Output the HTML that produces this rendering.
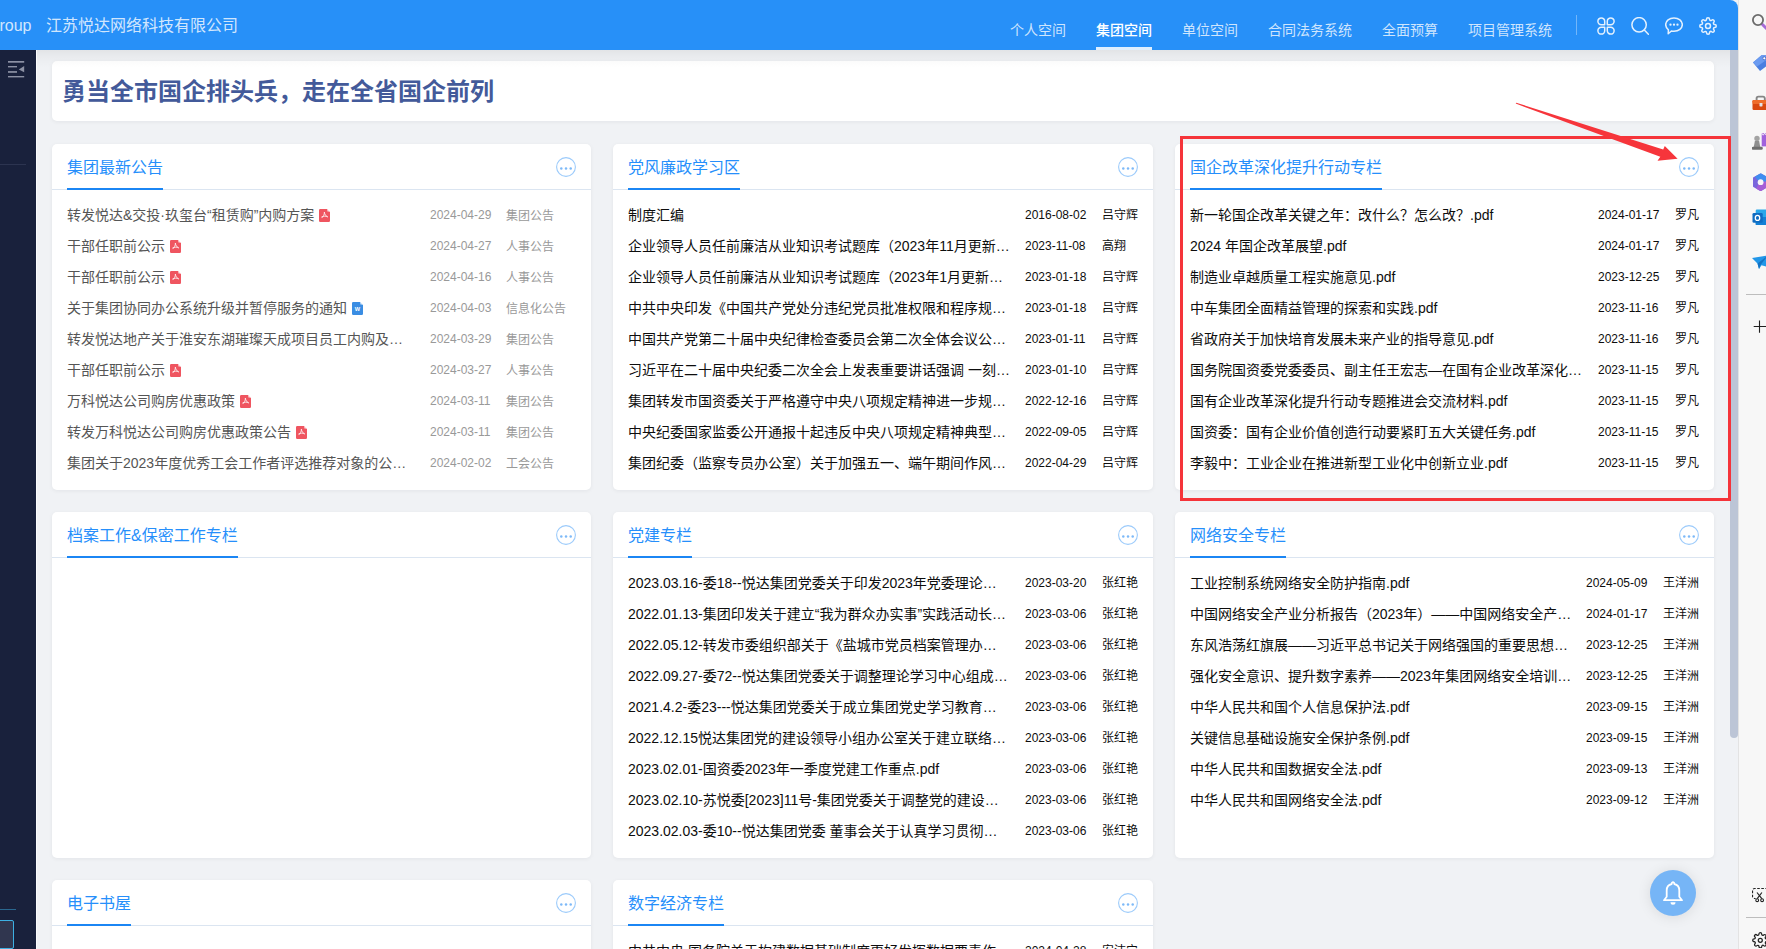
<!DOCTYPE html>
<html lang="zh-CN"><head><meta charset="utf-8"><title>集团空间</title>
<style>
*{box-sizing:border-box;margin:0;padding:0}
html,body{width:1766px;height:949px;overflow:hidden}
body{position:relative;background:#f0f2f5;font-family:"Liberation Sans","Noto Sans CJK SC",sans-serif;font-size:14px;color:#333}
.abs{position:absolute}
#edge{left:1738px;top:0;width:28px;height:949px;background:#f7f7f7;border-left:1px solid #e3e3e3}
#hdr{left:0;top:0;width:1738px;height:50px;background:#2790f8;border-top-right-radius:8px;color:#fff}
#side{left:0;top:50px;width:36px;height:899px;background:#19213c}
#sideline{left:36px;top:50px;width:1px;height:899px;background:#fbfcfd}
#sb{left:1730px;top:50px;width:8px;height:688px;background:#bcc5d6;border-radius:0 0 4px 4px}
#hdrshadow{left:37px;top:50px;width:1693px;height:18px;background:linear-gradient(rgba(0,0,0,.058),rgba(0,0,0,.034) 28%,rgba(0,0,0,.014) 60%,rgba(0,0,0,0));pointer-events:none}
.card{position:absolute;background:#fff;border-radius:5px;box-shadow:0 1px 4px rgba(0,21,41,.06)}
#ttl{left:52px;top:61px;width:1662px;height:60px}
#ttl h1{position:absolute;left:10px;top:1px;line-height:60px;font-size:24px;font-weight:700;color:#435a9a;white-space:nowrap}
.ch{position:absolute;left:0;top:0;right:0;height:46px;border-bottom:1px solid #dbe5f1}
.ct{position:absolute;left:15px;top:0;height:46px;line-height:47px;font-size:16px;color:#268ffb;border-bottom:2px solid #1b86f4;white-space:nowrap}
.more{position:absolute;right:15px;top:13px;width:20px;height:20px}
.lst{position:absolute;left:15px;right:15px;top:56px}
.r{display:flex;height:31px;line-height:31px;white-space:nowrap}
.t{flex:1 1 0;min-width:0;overflow:hidden;font-size:14px}
.d{flex:0 0 auto;font-size:12px}
.n{flex:0 0 auto;font-size:12px;position:relative}
.g .n{top:1px}
.g .t{color:#555}
.g .d,.g .n{color:#999}
.k .t,.k .d,.k .n{color:#0d0d0d}
.ic{display:inline-block;width:11px;height:13px;vertical-align:-1.500px;margin-left:5px}
.nav{position:absolute;top:0;height:50px;line-height:60px;font-size:14px;color:rgba(255,255,255,.78);white-space:nowrap}
.nav.on{color:#fff;font-weight:500}
.nav.on:after{content:"";position:absolute;left:0;right:0;bottom:0;height:3px;background:rgba(255,255,255,.85)}
</style></head>
<body>
<div id="edge" class="abs">
<svg class="abs" style="left:13px;top:8px" width="15" height="24" viewBox="0 0 15 24"><path d="M10.500 16.500L15 21" stroke="#a66bd8" stroke-width="3" stroke-linecap="round"/><circle cx="6" cy="12" r="5.100" fill="none" stroke="#6b6b6b" stroke-width="1.800"/></svg>
<svg class="abs" style="left:13px;top:52px" width="15" height="20" viewBox="0 0 15 20"><path d="M1 10.500L9.500 3.200H16V13L8 19Z" fill="#4a7fe0"/><path d="M1 10.500L9.500 3.200H16V7L5 14.500Z" fill="#6b9bf0"/><circle cx="12.300" cy="6.300" r="1.500" fill="#fff" stroke="#3b5fc0" stroke-width=".8"/></svg>
<svg class="abs" style="left:13px;top:94px" width="15" height="18" viewBox="0 0 15 18"><path d="M4.600 6.500V4.400A1.800 1.800 0 0 1 6.400 2.600h4.600A1.800 1.800 0 0 1 12.800 4.400V6.500" fill="none" stroke="#858585" stroke-width="1.900"/><rect x="0.500" y="6" width="16" height="10" rx="1.200" fill="#d9480f"/><rect x="0.500" y="6" width="16" height="4" rx="1.200" fill="#ef6c2a"/><rect x="7.500" y="9" width="3" height="3.400" rx=".6" fill="#dfe3ea"/></svg>
<svg class="abs" style="left:13px;top:130px" width="15" height="24" viewBox="0 0 15 24"><path d="M9.700 3.200h6v13.200h-6z" fill="#a062dc"/><path d="M9.700 3.200l1.500 2 1.500-2 1.500 2" fill="none" stroke="#f7f7f7" stroke-width=".9"/><circle cx="5" cy="8.400" r="2.700" fill="#a3a3a3"/><path d="M2.900 11h4.200l1.200 6h-6.600Z" fill="#8f8f8f"/><rect x="-.2" y="16.800" width="11" height="3" rx="1.400" fill="#6e6e6e"/></svg>
<svg class="abs" style="left:13px;top:170px" width="15" height="24" viewBox="0 0 15 24"><path d="M8.700 4.200L15.600 8v8.300L8.700 20.200 1.800 16.200V8Z" fill="#7a66dc" stroke="#7a66dc" stroke-width="1.600" stroke-linejoin="round"/><path d="M8.700 4.200L15.600 8v4.200H8.700L4 6.900Z" fill="#3f8ef0" stroke="#3f8ef0" stroke-width="1.600" stroke-linejoin="round"/><path d="M8.700 20.200l6.900-4V12.200H8.700l-3.500 6Z" fill="#a55fd6" stroke="#a55fd6" stroke-width="1.600" stroke-linejoin="round"/><circle cx="8.600" cy="12.200" r="2.900" fill="#f7f7f7"/></svg>
<svg class="abs" style="left:13px;top:209px" width="15" height="24" viewBox="0 0 15 24"><rect x="3.700" y=".6" width="13" height="15.400" rx="1.200" fill="#29a7ea"/><rect x="3.700" y="8" width="13" height="8" fill="#1380d6"/><rect x=".5" y="4" width="10.200" height="9.800" rx="1.300" fill="#0f6cc2"/><ellipse cx="5.500" cy="8.900" rx="2.200" ry="2.500" fill="none" stroke="#fff" stroke-width="1.300"/></svg>
<svg class="abs" style="left:13px;top:250px" width="15" height="24" viewBox="0 0 15 24"><path d="M0 8l16-2.500V17l-6.500-1.800L7 19l-1.500-5.500Z" fill="#2196e8"/><path d="M5.500 13.500L16 5.500 8.500 15 7 19Z" fill="#1373c4"/></svg>
<div class="abs" style="left:7px;top:294px;width:21px;height:1px;background:#bdbdbd"></div>
<svg class="abs" style="left:13px;top:316px" width="15" height="20" viewBox="0 0 15 20"><path d="M7.500 4.400v12.400M1.700 10.500h14" stroke="#1f1f1f" stroke-width="1.100"/></svg>
<svg class="abs" style="left:13px;top:884px" width="15" height="22" viewBox="0 0 15 22"><path d="M16 4.500H2.500A2 2 0 0 0 .5 6.500v6A2 2 0 0 0 2.500 14.500H3.600" fill="none" stroke="#222" stroke-width="1.200" stroke-dasharray="2.600 1.500"/><path d="M5 8.500L9.800 14.700M9.900 8.500L5.200 14.700" stroke="#222" stroke-width="1.200"/><circle cx="5.200" cy="16.200" r="1.400" fill="none" stroke="#222" stroke-width="1.100"/><circle cx="10.100" cy="16.200" r="1.400" fill="none" stroke="#222" stroke-width="1.100"/></svg>
<div class="abs" style="left:7px;top:917px;width:21px;height:1px;background:#bdbdbd"></div>
<svg class="abs" style="left:12.500px;top:931.600px" width="16.600" height="16.600" viewBox="0 0 24 24" fill="none" stroke="#222" stroke-width="1.800" stroke-linejoin="round"><circle cx="12" cy="12" r="2.900"/><path d="M19.400 15a1.650 1.650 0 0 0 .33 1.820l.06.060a2 2 0 1 1-2.830 2.830l-.06-.06a1.650 1.650 0 0 0-1.820-.33 1.650 1.650 0 0 0-1 1.510V21a2 2 0 0 1-4 0v-.09A1.650 1.650 0 0 0 9 19.400a1.650 1.650 0 0 0-1.820.33l-.06.060a2 2 0 1 1-2.830-2.830l.06-.06a1.650 1.650 0 0 0 .33-1.820 1.650 1.650 0 0 0-1.510-1H3a2 2 0 0 1 0-4h.09A1.650 1.650 0 0 0 4.600 9a1.650 1.650 0 0 0-.33-1.820l-.06-.06a2 2 0 1 1 2.830-2.830l.06.060a1.650 1.650 0 0 0 1.820.33H9a1.650 1.650 0 0 0 1-1.510V3a2 2 0 0 1 4 0v.09a1.650 1.650 0 0 0 1 1.510 1.650 1.650 0 0 0 1.820-.33l.06-.06a2 2 0 1 1 2.830 2.830l-.06.060a1.650 1.650 0 0 0-.33 1.820V9a1.650 1.650 0 0 0 1.510 1H21a2 2 0 0 1 0 4h-.09a1.650 1.650 0 0 0-1.510 1z"/></svg>
</div>
<div id="hdr" class="abs">
<div class="abs" style="left:-13px;top:1px;height:50px;line-height:50px;font-size:16px;color:rgba(255,255,255,.8);white-space:nowrap">Group</div>
<div class="abs" style="left:46px;top:1px;height:50px;line-height:50px;font-size:16px;color:rgba(255,255,255,.8);white-space:nowrap">江苏悦达网络科技有限公司</div>
<div class="nav" style="left:1010px">个人空间</div>
<div class="nav on" style="left:1096px">集团空间</div>
<div class="nav" style="left:1182px">单位空间</div>
<div class="nav" style="left:1268px">合同法务系统</div>
<div class="nav" style="left:1382px">全面预算</div>
<div class="nav" style="left:1468px">项目管理系统</div>
<div class="abs" style="left:1576px;top:15px;width:1px;height:20px;background:rgba(255,255,255,.35)"></div>
<svg class="abs" style="left:1597px;top:16.500px" width="18" height="18" viewBox="0 0 18 18" fill="none" stroke="#e4f1fe" stroke-width="1.500" stroke-linejoin="round"><path d="M7.700 7.700H4.300A3.400 3.400 0 1 1 7.700 4.300Z"/><path d="M10.300 7.700V4.300A3.400 3.400 0 1 1 13.700 7.700Z"/><path d="M7.700 10.300V13.700A3.400 3.400 0 1 1 4.300 10.300Z"/><path d="M10.300 10.300H13.700A3.400 3.400 0 1 1 10.300 13.700Z"/></svg>
<svg class="abs" style="left:1631px;top:16.500px" width="18" height="18" viewBox="0 0 18 18" fill="none" stroke="#e4f1fe" stroke-width="1.500" stroke-linecap="round"><circle cx="8.100" cy="7.800" r="7.200"/><path d="M13.300 13L17.400 17.300"/></svg>
<svg class="abs" style="left:1665px;top:16.500px" width="18" height="18" viewBox="0 0 18 18" fill="none" stroke="#e4f1fe" stroke-width="1.500" stroke-linejoin="round"><path d="M9 .9c4.700 0 8.300 3 8.300 6.700s-3.600 6.700-8.300 6.700c-.9 0-1.800-.1-2.600-.3L3.200 16.800l.2-3.900C1.700 11.700.7 9.800.7 7.600.7 3.900 4.300.9 9 .9Z"/><g fill="#e4f1fe" stroke="none"><circle cx="5.500" cy="7.700" r="1.150"/><circle cx="9" cy="7.700" r="1.150"/><circle cx="12.500" cy="7.700" r="1.150"/></g></svg>
<svg class="abs" style="left:1699px;top:16.500px" width="18" height="18" viewBox="0 0 24 24" fill="none" stroke="#e4f1fe" stroke-width="2" stroke-linejoin="round"><circle cx="12" cy="12" r="3.300"/><path d="M19.400 15a1.650 1.650 0 0 0 .33 1.820l.06.060a2 2 0 1 1-2.830 2.830l-.06-.06a1.650 1.650 0 0 0-1.820-.33 1.650 1.650 0 0 0-1 1.510V21a2 2 0 0 1-4 0v-.09A1.650 1.650 0 0 0 9 19.400a1.650 1.650 0 0 0-1.820.33l-.06.060a2 2 0 1 1-2.830-2.830l.06-.06a1.650 1.650 0 0 0 .33-1.820 1.650 1.650 0 0 0-1.510-1H3a2 2 0 0 1 0-4h.09A1.650 1.650 0 0 0 4.600 9a1.650 1.650 0 0 0-.33-1.820l-.06-.06a2 2 0 1 1 2.830-2.830l.06.060a1.650 1.650 0 0 0 1.820.33H9a1.650 1.650 0 0 0 1-1.510V3a2 2 0 0 1 4 0v.09a1.650 1.650 0 0 0 1 1.510 1.650 1.650 0 0 0 1.820-.33l.06-.06a2 2 0 1 1 2.830 2.830l-.06.060a1.650 1.650 0 0 0-.33 1.820V9a1.650 1.650 0 0 0 1.510 1H21a2 2 0 0 1 0 4h-.09a1.650 1.650 0 0 0-1.510 1z"/></svg>
</div>
<div id="side" class="abs">
<svg class="abs" style="left:8px;top:11px" width="17" height="17" viewBox="0 0 17 17"><g fill="#8c91a4"><rect x="0" y="0" width="16.200" height="1.700"/><rect x="0" y="5" width="9" height="1.400"/><rect x="0" y="10.100" width="9" height="1.700"/><rect x="0" y="15" width="16.200" height="1.400"/><path d="M10.800 8.400L16.200 5v6.200Z"/></g></svg>
<div class="abs" style="left:0;top:114px;width:26px;height:1px;background:#2c3450"></div>
<div class="abs" style="left:0;top:859px;width:16px;height:1px;background:#2a678f"></div>
<div class="abs" style="left:-4px;top:870px;width:18px;height:29px;background:#30364f;border:1px solid #3db0e3;border-radius:2px"></div>
</div><div id="sideline" class="abs"></div>
<div id="ttl" class="card"><h1>勇当全市国企排头兵，走在全省国企前列</h1></div>
<div class="card" style="left:52px;top:144px;width:539px;height:346px">
<div class="ch"><div class="ct">集团最新公告</div><svg class="more" viewBox="0 0 20 20"><circle cx="10" cy="10" r="9.400" fill="#fff" stroke="#9ccbfb" stroke-width="1.100"/><circle cx="5.300" cy="11.600" r="1.250" fill="#7db9f8"/><circle cx="10" cy="11.600" r="1.250" fill="#7db9f8"/><circle cx="14.700" cy="11.600" r="1.250" fill="#7db9f8"/></svg></div>
<div class="lst g">
<div class="r"><div class="t" style="margin-right:20px">转发悦达&amp;交投·玖玺台“租赁购”内购方案<svg class="ic" viewBox="0 0 11 13"><path d="M1.2 0H8l3 3v8.8A1.2 1.2 0 0 1 9.800 13H1.2A1.200 1.200 0 0 1 0 11.800V1.200A1.200 1.200 0 0 1 1.200 0z" fill="#ef5560"/><path d="M8.400 0L11 2.600H9A.6.600 0 0 1 8.400 2z" fill="#fdeaec"/><path d="M5.400 3.500c.3 1.900 1.400 3.400 3 4.300M5.400 3.500c0 2.100-.9 4-2.500 5.300M2.900 7.700c1.800-.7 3.700-.7 5.500 0" stroke="#fff" stroke-width=".75" fill="none" stroke-linecap="round"/></svg></div><div class="d" style="width:76px">2024-04-29</div><div class="n" style="width:70px">集团公告</div></div>
<div class="r"><div class="t" style="margin-right:20px">干部任职前公示<svg class="ic" viewBox="0 0 11 13"><path d="M1.2 0H8l3 3v8.8A1.2 1.2 0 0 1 9.800 13H1.2A1.200 1.200 0 0 1 0 11.800V1.200A1.200 1.200 0 0 1 1.200 0z" fill="#ef5560"/><path d="M8.400 0L11 2.600H9A.6.600 0 0 1 8.400 2z" fill="#fdeaec"/><path d="M5.400 3.500c.3 1.900 1.400 3.400 3 4.300M5.400 3.500c0 2.100-.9 4-2.500 5.300M2.900 7.700c1.800-.7 3.700-.7 5.500 0" stroke="#fff" stroke-width=".75" fill="none" stroke-linecap="round"/></svg></div><div class="d" style="width:76px">2024-04-27</div><div class="n" style="width:70px">人事公告</div></div>
<div class="r"><div class="t" style="margin-right:20px">干部任职前公示<svg class="ic" viewBox="0 0 11 13"><path d="M1.2 0H8l3 3v8.8A1.2 1.2 0 0 1 9.800 13H1.2A1.200 1.200 0 0 1 0 11.800V1.200A1.200 1.200 0 0 1 1.200 0z" fill="#ef5560"/><path d="M8.400 0L11 2.600H9A.6.600 0 0 1 8.400 2z" fill="#fdeaec"/><path d="M5.400 3.500c.3 1.900 1.400 3.400 3 4.300M5.400 3.500c0 2.100-.9 4-2.500 5.300M2.900 7.700c1.800-.7 3.700-.7 5.500 0" stroke="#fff" stroke-width=".75" fill="none" stroke-linecap="round"/></svg></div><div class="d" style="width:76px">2024-04-16</div><div class="n" style="width:70px">人事公告</div></div>
<div class="r"><div class="t" style="margin-right:20px">关于集团协同办公系统升级并暂停服务的通知<svg class="ic" viewBox="0 0 11 13"><path d="M1.2 0H8l3 3v8.8A1.2 1.2 0 0 1 9.800 13H1.2A1.200 1.200 0 0 1 0 11.800V1.200A1.200 1.200 0 0 1 1.200 0z" fill="#3a8de3"/><path d="M8.400 0L11 2.600H9A.6.600 0 0 1 8.400 2z" fill="#e3effb"/><text x="5.300" y="9.200" font-size="5.600" font-weight="700" fill="#fff" text-anchor="middle" font-family="Liberation Sans, sans-serif">W</text></svg></div><div class="d" style="width:76px">2024-04-03</div><div class="n" style="width:70px">信息化公告</div></div>
<div class="r"><div class="t" style="margin-right:20px">转发悦达地产关于淮安东湖璀璨天成项目员工内购及…</div><div class="d" style="width:76px">2024-03-29</div><div class="n" style="width:70px">集团公告</div></div>
<div class="r"><div class="t" style="margin-right:20px">干部任职前公示<svg class="ic" viewBox="0 0 11 13"><path d="M1.2 0H8l3 3v8.8A1.2 1.2 0 0 1 9.800 13H1.2A1.200 1.200 0 0 1 0 11.800V1.200A1.200 1.200 0 0 1 1.200 0z" fill="#ef5560"/><path d="M8.400 0L11 2.600H9A.6.600 0 0 1 8.400 2z" fill="#fdeaec"/><path d="M5.400 3.500c.3 1.900 1.400 3.400 3 4.300M5.400 3.500c0 2.100-.9 4-2.500 5.300M2.900 7.700c1.800-.7 3.700-.7 5.500 0" stroke="#fff" stroke-width=".75" fill="none" stroke-linecap="round"/></svg></div><div class="d" style="width:76px">2024-03-27</div><div class="n" style="width:70px">人事公告</div></div>
<div class="r"><div class="t" style="margin-right:20px">万科悦达公司购房优惠政策<svg class="ic" viewBox="0 0 11 13"><path d="M1.2 0H8l3 3v8.8A1.2 1.2 0 0 1 9.800 13H1.2A1.200 1.200 0 0 1 0 11.800V1.200A1.200 1.200 0 0 1 1.200 0z" fill="#ef5560"/><path d="M8.400 0L11 2.600H9A.6.600 0 0 1 8.400 2z" fill="#fdeaec"/><path d="M5.400 3.500c.3 1.900 1.400 3.400 3 4.300M5.400 3.500c0 2.100-.9 4-2.500 5.300M2.900 7.700c1.800-.7 3.700-.7 5.500 0" stroke="#fff" stroke-width=".75" fill="none" stroke-linecap="round"/></svg></div><div class="d" style="width:76px">2024-03-11</div><div class="n" style="width:70px">集团公告</div></div>
<div class="r"><div class="t" style="margin-right:20px">转发万科悦达公司购房优惠政策公告<svg class="ic" viewBox="0 0 11 13"><path d="M1.2 0H8l3 3v8.8A1.2 1.2 0 0 1 9.800 13H1.2A1.200 1.200 0 0 1 0 11.800V1.200A1.200 1.200 0 0 1 1.200 0z" fill="#ef5560"/><path d="M8.400 0L11 2.600H9A.6.600 0 0 1 8.400 2z" fill="#fdeaec"/><path d="M5.400 3.500c.3 1.900 1.400 3.400 3 4.300M5.400 3.500c0 2.100-.9 4-2.500 5.300M2.900 7.700c1.800-.7 3.700-.7 5.500 0" stroke="#fff" stroke-width=".75" fill="none" stroke-linecap="round"/></svg></div><div class="d" style="width:76px">2024-03-11</div><div class="n" style="width:70px">集团公告</div></div>
<div class="r"><div class="t" style="margin-right:20px">集团关于2023年度优秀工会工作者评选推荐对象的公…</div><div class="d" style="width:76px">2024-02-02</div><div class="n" style="width:70px">工会公告</div></div>
</div></div>
<div class="card" style="left:613px;top:144px;width:540px;height:346px">
<div class="ch"><div class="ct">党风廉政学习区</div><svg class="more" viewBox="0 0 20 20"><circle cx="10" cy="10" r="9.400" fill="#fff" stroke="#9ccbfb" stroke-width="1.100"/><circle cx="5.300" cy="11.600" r="1.250" fill="#7db9f8"/><circle cx="10" cy="11.600" r="1.250" fill="#7db9f8"/><circle cx="14.700" cy="11.600" r="1.250" fill="#7db9f8"/></svg></div>
<div class="lst k">
<div class="r"><div class="t" style="margin-right:15px">制度汇编</div><div class="d" style="width:77px">2016-08-02</div><div class="n" style="width:36px">吕守辉</div></div>
<div class="r"><div class="t" style="margin-right:15px">企业领导人员任前廉洁从业知识考试题库（2023年11月更新…</div><div class="d" style="width:77px">2023-11-08</div><div class="n" style="width:36px">高翔</div></div>
<div class="r"><div class="t" style="margin-right:15px">企业领导人员任前廉洁从业知识考试题库（2023年1月更新…</div><div class="d" style="width:77px">2023-01-18</div><div class="n" style="width:36px">吕守辉</div></div>
<div class="r"><div class="t" style="margin-right:15px">中共中央印发《中国共产党处分违纪党员批准权限和程序规…</div><div class="d" style="width:77px">2023-01-18</div><div class="n" style="width:36px">吕守辉</div></div>
<div class="r"><div class="t" style="margin-right:15px">中国共产党第二十届中央纪律检查委员会第二次全体会议公…</div><div class="d" style="width:77px">2023-01-11</div><div class="n" style="width:36px">吕守辉</div></div>
<div class="r"><div class="t" style="margin-right:15px">习近平在二十届中央纪委二次全会上发表重要讲话强调 一刻…</div><div class="d" style="width:77px">2023-01-10</div><div class="n" style="width:36px">吕守辉</div></div>
<div class="r"><div class="t" style="margin-right:15px">集团转发市国资委关于严格遵守中央八项规定精神进一步规…</div><div class="d" style="width:77px">2022-12-16</div><div class="n" style="width:36px">吕守辉</div></div>
<div class="r"><div class="t" style="margin-right:15px">中央纪委国家监委公开通报十起违反中央八项规定精神典型…</div><div class="d" style="width:77px">2022-09-05</div><div class="n" style="width:36px">吕守辉</div></div>
<div class="r"><div class="t" style="margin-right:15px">集团纪委（监察专员办公室）关于加强五一、端午期间作风…</div><div class="d" style="width:77px">2022-04-29</div><div class="n" style="width:36px">吕守辉</div></div>
</div></div>
<div class="card" style="left:1175px;top:144px;width:539px;height:346px">
<div class="ch"><div class="ct">国企改革深化提升行动专栏</div><svg class="more" viewBox="0 0 20 20"><circle cx="10" cy="10" r="9.400" fill="#fff" stroke="#9ccbfb" stroke-width="1.100"/><circle cx="5.300" cy="11.600" r="1.250" fill="#7db9f8"/><circle cx="10" cy="11.600" r="1.250" fill="#7db9f8"/><circle cx="14.700" cy="11.600" r="1.250" fill="#7db9f8"/></svg></div>
<div class="lst k">
<div class="r"><div class="t" style="margin-right:15px">新一轮国企改革关键之年：改什么？怎么改？.pdf</div><div class="d" style="width:77px">2024-01-17</div><div class="n" style="width:24px">罗凡</div></div>
<div class="r"><div class="t" style="margin-right:15px">2024 年国企改革展望.pdf</div><div class="d" style="width:77px">2024-01-17</div><div class="n" style="width:24px">罗凡</div></div>
<div class="r"><div class="t" style="margin-right:15px">制造业卓越质量工程实施意见.pdf</div><div class="d" style="width:77px">2023-12-25</div><div class="n" style="width:24px">罗凡</div></div>
<div class="r"><div class="t" style="margin-right:15px">中车集团全面精益管理的探索和实践.pdf</div><div class="d" style="width:77px">2023-11-16</div><div class="n" style="width:24px">罗凡</div></div>
<div class="r"><div class="t" style="margin-right:15px">省政府关于加快培育发展未来产业的指导意见.pdf</div><div class="d" style="width:77px">2023-11-16</div><div class="n" style="width:24px">罗凡</div></div>
<div class="r"><div class="t" style="margin-right:15px">国务院国资委党委委员、副主任王宏志—在国有企业改革深化…</div><div class="d" style="width:77px">2023-11-15</div><div class="n" style="width:24px">罗凡</div></div>
<div class="r"><div class="t" style="margin-right:15px">国有企业改革深化提升行动专题推进会交流材料.pdf</div><div class="d" style="width:77px">2023-11-15</div><div class="n" style="width:24px">罗凡</div></div>
<div class="r"><div class="t" style="margin-right:15px">国资委：国有企业价值创造行动要紧盯五大关键任务.pdf</div><div class="d" style="width:77px">2023-11-15</div><div class="n" style="width:24px">罗凡</div></div>
<div class="r"><div class="t" style="margin-right:15px">李毅中：工业企业在推进新型工业化中创新立业.pdf</div><div class="d" style="width:77px">2023-11-15</div><div class="n" style="width:24px">罗凡</div></div>
</div></div>
<div class="card" style="left:52px;top:512px;width:539px;height:346px">
<div class="ch"><div class="ct">档案工作&amp;保密工作专栏</div><svg class="more" viewBox="0 0 20 20"><circle cx="10" cy="10" r="9.400" fill="#fff" stroke="#9ccbfb" stroke-width="1.100"/><circle cx="5.300" cy="11.600" r="1.250" fill="#7db9f8"/><circle cx="10" cy="11.600" r="1.250" fill="#7db9f8"/><circle cx="14.700" cy="11.600" r="1.250" fill="#7db9f8"/></svg></div>
<div class="lst k">
</div></div>
<div class="card" style="left:613px;top:512px;width:540px;height:346px">
<div class="ch"><div class="ct">党建专栏</div><svg class="more" viewBox="0 0 20 20"><circle cx="10" cy="10" r="9.400" fill="#fff" stroke="#9ccbfb" stroke-width="1.100"/><circle cx="5.300" cy="11.600" r="1.250" fill="#7db9f8"/><circle cx="10" cy="11.600" r="1.250" fill="#7db9f8"/><circle cx="14.700" cy="11.600" r="1.250" fill="#7db9f8"/></svg></div>
<div class="lst k">
<div class="r"><div class="t" style="margin-right:15px">2023.03.16-委18--悦达集团党委关于印发2023年党委理论…</div><div class="d" style="width:77px">2023-03-20</div><div class="n" style="width:36px">张红艳</div></div>
<div class="r"><div class="t" style="margin-right:15px">2022.01.13-集团印发关于建立“我为群众办实事”实践活动长…</div><div class="d" style="width:77px">2023-03-06</div><div class="n" style="width:36px">张红艳</div></div>
<div class="r"><div class="t" style="margin-right:15px">2022.05.12-转发市委组织部关于《盐城市党员档案管理办…</div><div class="d" style="width:77px">2023-03-06</div><div class="n" style="width:36px">张红艳</div></div>
<div class="r"><div class="t" style="margin-right:15px">2022.09.27-委72--悦达集团党委关于调整理论学习中心组成…</div><div class="d" style="width:77px">2023-03-06</div><div class="n" style="width:36px">张红艳</div></div>
<div class="r"><div class="t" style="margin-right:15px">2021.4.2-委23---悦达集团党委关于成立集团党史学习教育…</div><div class="d" style="width:77px">2023-03-06</div><div class="n" style="width:36px">张红艳</div></div>
<div class="r"><div class="t" style="margin-right:15px">2022.12.15悦达集团党的建设领导小组办公室关于建立联络…</div><div class="d" style="width:77px">2023-03-06</div><div class="n" style="width:36px">张红艳</div></div>
<div class="r"><div class="t" style="margin-right:15px">2023.02.01-国资委2023年一季度党建工作重点.pdf</div><div class="d" style="width:77px">2023-03-06</div><div class="n" style="width:36px">张红艳</div></div>
<div class="r"><div class="t" style="margin-right:15px">2023.02.10-苏悦委[2023]11号-集团党委关于调整党的建设…</div><div class="d" style="width:77px">2023-03-06</div><div class="n" style="width:36px">张红艳</div></div>
<div class="r"><div class="t" style="margin-right:15px">2023.02.03-委10--悦达集团党委 董事会关于认真学习贯彻…</div><div class="d" style="width:77px">2023-03-06</div><div class="n" style="width:36px">张红艳</div></div>
</div></div>
<div class="card" style="left:1175px;top:512px;width:539px;height:346px">
<div class="ch"><div class="ct">网络安全专栏</div><svg class="more" viewBox="0 0 20 20"><circle cx="10" cy="10" r="9.400" fill="#fff" stroke="#9ccbfb" stroke-width="1.100"/><circle cx="5.300" cy="11.600" r="1.250" fill="#7db9f8"/><circle cx="10" cy="11.600" r="1.250" fill="#7db9f8"/><circle cx="14.700" cy="11.600" r="1.250" fill="#7db9f8"/></svg></div>
<div class="lst k">
<div class="r"><div class="t" style="margin-right:15px">工业控制系统网络安全防护指南.pdf</div><div class="d" style="width:77px">2024-05-09</div><div class="n" style="width:36px">王洋洲</div></div>
<div class="r"><div class="t" style="margin-right:15px">中国网络安全产业分析报告（2023年）——中国网络安全产…</div><div class="d" style="width:77px">2024-01-17</div><div class="n" style="width:36px">王洋洲</div></div>
<div class="r"><div class="t" style="margin-right:15px">东风浩荡红旗展——习近平总书记关于网络强国的重要思想…</div><div class="d" style="width:77px">2023-12-25</div><div class="n" style="width:36px">王洋洲</div></div>
<div class="r"><div class="t" style="margin-right:15px">强化安全意识、提升数字素养——2023年集团网络安全培训…</div><div class="d" style="width:77px">2023-12-25</div><div class="n" style="width:36px">王洋洲</div></div>
<div class="r"><div class="t" style="margin-right:15px">中华人民共和国个人信息保护法.pdf</div><div class="d" style="width:77px">2023-09-15</div><div class="n" style="width:36px">王洋洲</div></div>
<div class="r"><div class="t" style="margin-right:15px">关键信息基础设施安全保护条例.pdf</div><div class="d" style="width:77px">2023-09-15</div><div class="n" style="width:36px">王洋洲</div></div>
<div class="r"><div class="t" style="margin-right:15px">中华人民共和国数据安全法.pdf</div><div class="d" style="width:77px">2023-09-13</div><div class="n" style="width:36px">王洋洲</div></div>
<div class="r"><div class="t" style="margin-right:15px">中华人民共和国网络安全法.pdf</div><div class="d" style="width:77px">2023-09-12</div><div class="n" style="width:36px">王洋洲</div></div>
</div></div>
<div class="card" style="left:52px;top:880px;width:539px;height:346px">
<div class="ch"><div class="ct">电子书屋</div><svg class="more" viewBox="0 0 20 20"><circle cx="10" cy="10" r="9.400" fill="#fff" stroke="#9ccbfb" stroke-width="1.100"/><circle cx="5.300" cy="11.600" r="1.250" fill="#7db9f8"/><circle cx="10" cy="11.600" r="1.250" fill="#7db9f8"/><circle cx="14.700" cy="11.600" r="1.250" fill="#7db9f8"/></svg></div>
<div class="lst k">
</div></div>
<div class="card" style="left:613px;top:880px;width:540px;height:346px">
<div class="ch"><div class="ct">数字经济专栏</div><svg class="more" viewBox="0 0 20 20"><circle cx="10" cy="10" r="9.400" fill="#fff" stroke="#9ccbfb" stroke-width="1.100"/><circle cx="5.300" cy="11.600" r="1.250" fill="#7db9f8"/><circle cx="10" cy="11.600" r="1.250" fill="#7db9f8"/><circle cx="14.700" cy="11.600" r="1.250" fill="#7db9f8"/></svg></div>
<div class="lst k">
<div class="r"><div class="t" style="margin-right:15px">中共中央 国务院关于构建数据基础制度更好发挥数据要素作…</div><div class="d" style="width:77px">2024-04-28</div><div class="n" style="width:36px">安洁宁</div></div>
</div></div>
<div id="hdrshadow" class="abs"></div>
<div id="sb" class="abs"></div>

<div class="abs" style="left:1180px;top:136px;width:551px;height:365px;border:3px solid #f5343a"></div>
<svg class="abs" style="left:1500px;top:90px" width="200" height="90" viewBox="1500 90 200 90"><path d="M1516.300 102.700L1663.200 149.600L1664.800 146L1677.600 158.700L1657.500 160.800L1660.300 156.800L1515.700 103.600Z" fill="#f6353b"/></svg>
<div class="abs" style="left:1650px;top:870px;width:46px;height:46px;border-radius:50%;background:#76b5f6;box-shadow:0 1px 14px rgba(0,0,0,.10)"><svg class="abs" style="left:13px;top:11px" width="20" height="24" viewBox="0 0 20 24"><path d="M10 1.200a1.300 1.300 0 0 1 1.300 1.300v.5C14.500 3.700 16.300 6.300 16.300 9.500v6.200l2.700 3.500H1l2.700-3.500V9.500C3.700 6.300 5.500 3.700 8.700 3V2.500A1.300 1.300 0 0 1 10 1.200Z" fill="none" stroke="#fff" stroke-width="1.800" stroke-linejoin="round"/><path d="M7.500 21.300h5a2.500 2.500 0 0 1-5 0Z" fill="#fff"/></svg></div>

</body></html>
